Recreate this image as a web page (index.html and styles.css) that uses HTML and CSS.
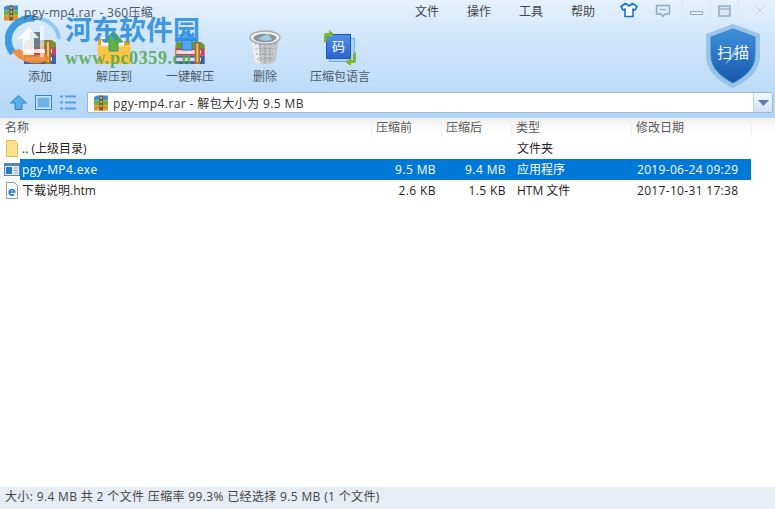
FILE: index.html
```html
<!DOCTYPE html>
<html lang="zh">
<head>
<meta charset="utf-8">
<title>360压缩</title>
<link rel="stylesheet" href="styles.css">
</head>
<body>
<svg class="defs" width="0" height="0" aria-hidden="true">
  <defs>
    <symbol id="rar" viewBox="0 0 16 16">
      <path d="M1 2 L4 0.5 H15 V5.5 H1Z" fill="#3f8fd8"/>
      <path d="M1 5.5H15V10.5H1Z" fill="#6fae3a"/>
      <path d="M1 10.5H15V15.5H1Z" fill="#e8912c"/>
      <rect x="6.5" y="0.5" width="3.4" height="15" fill="#7a5a2a"/>
      <rect x="7.6" y="2" width="1.2" height="2" fill="#e8d9a8"/>
      <rect x="7.6" y="6" width="1.2" height="2" fill="#e8d9a8"/>
      <rect x="7.6" y="10" width="1.2" height="2" fill="#e8d9a8"/>
    </symbol>
    <symbol id="books" viewBox="0 0 36 24">
      <path d="M4 0H30L34 3V8H2V3Z" fill="#6d9b33"/>
      <path d="M2 7H34V15H2Z" fill="#c5455c"/>
      <path d="M3 9H30V13H3Z" fill="#f3dfe0"/>
      <path d="M2 15H34V24H2Z" fill="#3e5ea8"/>
      <path d="M3 17H30V21H3Z" fill="#dfe6f3"/>
      <rect x="23" y="0" width="6" height="24" fill="#a8742c"/>
      <rect x="25" y="2" width="2" height="20" fill="#e2c47e"/>
    </symbol>
  </defs>
</svg>
<div class="app">
  <header class="head">
    <div class="titlebar">
      <svg class="rar-icon" width="16" height="16"><use href="#rar"/></svg>
      <span class="title">pgy-mp4.rar - 360压缩</span>
      <nav class="menu">
        <span class="menu-item">文件</span>
        <span class="menu-item">操作</span>
        <span class="menu-item">工具</span>
        <span class="menu-item">帮助</span>
      </nav>
      <div class="win-btns">
        <svg class="win-skin" width="18" height="16" viewBox="0 0 18 16"><path d="M5.5 1.500 L1 4.500 L3 8 L5 7 V14.500 H13 V7 L15 8 L17 4.500 L12.500 1.500 L9 4Z" fill="#fff" stroke="#1273c9" stroke-width="1.600" stroke-linejoin="round"/></svg>
        <svg class="win-fb" width="16" height="14" viewBox="0 0 16 14"><path d="M1.500 1.500H14.500V10H10L8 12.500L6 10H1.500Z" fill="#dcebfa" stroke="#8ea9c2" stroke-width="1.400"/><path d="M5 5.500H11" stroke="#8ea9c2" stroke-width="1.200"/></svg>
        <span class="win-sep sep-a"></span>
        <svg class="win-min" width="13" height="5" viewBox="0 0 13 5"><rect x="0.500" y="0.500" width="12" height="3" fill="#e4eef8" stroke="#95aec6"/></svg>
        <span class="win-sep sep-b"></span>
        <svg class="win-max" width="13" height="12" viewBox="0 0 13 12"><rect x="1" y="1" width="11" height="10" fill="#d8e8f8" stroke="#8ea9c2" stroke-width="1.400"/><path d="M2 4H11" stroke="#8ea9c2" stroke-width="1.200"/></svg>
        <span class="win-sep sep-c"></span>
        <svg class="win-close" width="14" height="14" viewBox="0 0 14 14"><path d="M2 2L12 12M12 2L2 12" stroke="#f1f6fb" stroke-width="3"/><path d="M2 2L12 12M12 2L2 12" stroke="#a9bfd3" stroke-width="0.800"/></svg>
      </div>
    </div>
    <div class="toolbar">
      <div class="tool tool-add">
        <svg class="tool-icon" width="36" height="36" viewBox="0 0 36 36"><use href="#books" y="10" width="36" height="24"/><path d="M8 2H18V10H23L13 20L3 10H8Z" fill="#6c7f8e"/></svg>
        <span class="tool-label">添加</span>
      </div>
      <div class="tool tool-extract">
        <svg class="tool-icon" width="36" height="36" viewBox="0 0 36 36"><path d="M2 8H14L16 11H34V34H2Z" fill="#e0a21e"/><path d="M5 7H28V22H5Z" fill="#f4f6f7"/><path d="M1 16H35L33 34H3Z" fill="#fbc544"/><path d="M1 16H35" stroke="#fde7a4"/><path d="M13 21V12H8L17.500 1L27 12H22V21Z" fill="#5fb33a" stroke="#3a8c8c"/></svg>
        <span class="tool-label">解压到</span>
      </div>
      <div class="tool tool-onekey">
        <svg class="tool-icon" width="36" height="36" viewBox="0 0 36 36"><use href="#books" y="12" width="36" height="22"/><path d="M10 20V11H4L15 1L26 11H20V20Z" fill="#52a6ee" stroke="#2f78bd"/></svg>
        <span class="tool-label">一键解压</span>
      </div>
      <div class="tool tool-delete">
        <svg class="tool-icon" width="34" height="36" viewBox="0 0 34 36"><path d="M3 7L6 30Q7 34 17 34T28 30L31 7Z" fill="#c4c6c8"/><path d="M3 7L6 30Q7 34 13 33.500L10 8Z" fill="#eceded"/><path d="M7 14H28M7.500 19H27.500M8 24H27M9 29H26M12 11V33M17 11V34M22 11V33" stroke="#8f9193" stroke-width="1.200" stroke-dasharray="1.600 1.600"/><ellipse cx="17" cy="7.500" rx="15" ry="6.500" fill="#f0f1f1" stroke="#a7a9ab" stroke-width="1.400"/><ellipse cx="17" cy="8" rx="11.500" ry="4.200" fill="#8b9298"/><path d="M10 8.500L20 3.800L24 9.500Q16 12.500 10 8.500Z" fill="#a5cbe8"/></svg>
        <span class="tool-label">删除</span>
      </div>
      <div class="tool tool-lang">
        <div class="lang-icon">
          <span class="lang-back"></span>
          <span class="lang-glyph">码</span>
          <svg class="lang-arrows" width="34" height="36" viewBox="0 0 34 36"><path d="M1 13V5Q1 3 3 3H6V0L11 4L6 8V6H4V11Z" fill="#7cb82f"/><path d="M33 22V31Q33 33 31 33H28V36L22 32L28 28V30H30V24Z" fill="#7cb82f"/></svg>
        </div>
        <span class="tool-label">压缩包语言</span>
      </div>
      <div class="scan">
        <svg class="scan-shield" width="54" height="64" viewBox="0 0 54 64"><defs><linearGradient id="shieldfill" x1="0" y1="0" x2="0" y2="1"><stop offset="0" stop-color="#3f92db"/><stop offset="1" stop-color="#1657ab"/></linearGradient></defs><path d="M27 0L54 10V31C54 48 40 58 27 64C14 58 0 48 0 31V10Z" fill="#8bb8df" opacity=".75"/><path d="M27 5L49 13V31C49 45 38 53 27 59C16 53 5 45 5 31V13Z" fill="url(#shieldfill)" stroke="#2f86d0"/><path d="M34 18L18 42L28 32Z" fill="#7fb4e6"/></svg>
        <span class="scan-text">扫描</span>
      </div>
    </div>
    <div class="addressbar">
      <svg class="nav-up" width="17" height="15" viewBox="0 0 17 15"><path d="M5 14.500V8H0.500L8.500 0.500L16.500 8H12V14.500Z" fill="#58aeec" stroke="#2b7fc6"/></svg>
      <svg class="nav-view" width="17" height="15" viewBox="0 0 17 15"><rect x="0.500" y="0.500" width="16" height="14" fill="#cfe3f6" stroke="#2f86d0"/><rect x="2.500" y="2.500" width="12" height="10" fill="#6fb0e8" stroke="#a9d0f2"/></svg>
      <svg class="nav-list" width="16" height="15" viewBox="0 0 16 15"><path d="M0 1.500H3M5 1.500H16M0 7.500H3M5 7.500H16M0 13.500H3M5 13.500H16" stroke="#5a9fdc" stroke-width="2"/></svg>
      <div class="path">
        <svg class="rar-icon path-icon" width="16" height="16"><use href="#rar"/></svg>
        <span class="path-text">pgy-mp4.rar - 解包大小为 9.5 MB</span>
        <span class="path-drop"><svg width="11" height="6" viewBox="0 0 11 6"><path d="M0 0H11L5.500 6Z" fill="#5d7fa6"/></svg></span>
      </div>
    </div>
  </header>
  <main class="list">
    <div class="cols">
      <span class="col">名称</span>
      <span class="col">压缩前</span>
      <span class="col">压缩后</span>
      <span class="col">类型</span>
      <span class="col">修改日期</span>
      <span class="col col-end"></span>
    </div>
    <div class="row">
      <svg class="file-icon" width="14" height="17" viewBox="0 0 14 17"><path d="M1.500 0.500H10L12.500 3V16.500H1.500Z" fill="#fde08a" stroke="#e3bb55"/></svg>
      <div class="cells">
        <span class="cell name">.. (上级目录)</span>
        <span class="cell num"></span>
        <span class="cell num"></span>
        <span class="cell type">文件夹</span>
        <span class="cell date"></span>
      </div>
    </div>
    <div class="row">
      <svg class="file-icon" width="16" height="13" viewBox="0 0 16 13"><rect width="16" height="13" fill="#5b86b4"/><rect x="1" y="3" width="14" height="9" fill="#e6eff8"/><rect x="2" y="4" width="6" height="7" fill="#1f7bd4"/><path d="M9.500 5H14M9.500 7.500H14M9.500 10H14" stroke="#7aa3cc"/></svg>
      <div class="cells selected">
        <span class="cell name">pgy-MP4.exe</span>
        <span class="cell num">9.5 MB</span>
        <span class="cell num">9.4 MB</span>
        <span class="cell type">应用程序</span>
        <span class="cell date">2019-06-24 09:29</span>
      </div>
    </div>
    <div class="row">
      <svg class="file-icon" width="14" height="17" viewBox="0 0 14 17"><path d="M1.500 0.500H9.500L12.500 3.500V16.500H1.500Z" fill="#fff" stroke="#9a9a9a"/><path d="M4.800 10H9.800A2.800 2.800 0 1 0 9 12.300" fill="none" stroke="#1f7bd4" stroke-width="1.700"/></svg>
      <div class="cells">
        <span class="cell name">下载说明.htm</span>
        <span class="cell num">2.6 KB</span>
        <span class="cell num">1.5 KB</span>
        <span class="cell type">HTM 文件</span>
        <span class="cell date">2017-10-31 17:38</span>
      </div>
    </div>
  </main>
  <footer class="status">大小: 9.4 MB 共 2 个文件 压缩率 99.3% 已经选择 9.5 MB (1 个文件)</footer>
</div>
<div class="watermark">
  <svg class="wm-logo" width="58" height="52" viewBox="0 0 58 52"><path d="M30 3A25 22 0 0 0 8 38" fill="none" stroke="#2a8fdc" stroke-width="7" opacity=".88"/><path d="M30 3A25 22 0 0 1 54 24" fill="none" stroke="#7fc0ee" stroke-width="4" opacity=".8"/><path d="M7 36A26 22 0 0 0 46 44L40 38A18 14 0 0 1 15 34Z" fill="#ef8a2e" opacity=".9"/><path d="M12 24L24 12L34 23H29V40H18V24Z" fill="#fff" opacity=".85"/><path d="M35 10H39V42H35Z" fill="#fff" opacity=".6"/></svg>
  <span class="wm-cn">河东软件园</span>
  <span class="wm-url">www.pc0359.cn</span>
</div>
</body>
</html>
```

FILE: styles.css
```css
* { box-sizing: border-box; }
html, body { margin: 0; padding: 0; }
body {
  width: 775px;
  height: 509px;
  overflow: hidden;
  font-family: "Open Sans", "Noto Sans CJK SC", sans-serif;
  font-size: 12px;
  color: #222;
  position: relative;
  background: #fff;
}
.defs { position: absolute; }
.app { display: flex; flex-direction: column; height: 509px; }

.head {
  height: 118px;
  flex: none;
  background: linear-gradient(#e6f2fd 0, #d3e8fb 30px, #b3d6f7 100%);
  display: flex;
  flex-direction: column;
}
.titlebar { height: 24px; display: flex; align-items: center; padding: 2px 0 0 3px; position: relative; }
.title { margin-left: 5px; color: #4a5764; letter-spacing: .3px; position: relative; z-index: 2; line-height: 14px; }
.rar-icon { flex: none; }
.menu { position: absolute; left: 401px; top: 0; display: flex; height: 21px; align-items: center; }
.menu-item { width: 52px; text-align: center; color: #444; }

.win-btns { position: absolute; top: 0; right: 0; width: 160px; height: 21px; }
.win-btns svg, .win-sep { position: absolute; }
.win-skin { left: 5px; top: 2px; }
.win-fb { left: 40px; top: 4px; }
.win-min { left: 75px; top: 11px; }
.win-max { left: 103px; top: 5px; }
.win-close { left: 138px; top: 3px; }
.win-sep { top: 0; width: 1px; height: 18px; background: #d6e7f7; }
.sep-a { left: 67px; }
.sep-b { left: 95px; }
.sep-c { left: 123px; }

.toolbar { height: 68px; display: flex; position: relative; padding-left: 3px; }
.tool { display: flex; flex-direction: column; align-items: center; flex: none; }
.tool-add { width: 74px; }
.tool-extract { width: 74px; }
.tool-onekey { width: 78px; }
.tool-delete { width: 72px; }
.tool-lang { width: 78px; }
.tool-icon { margin-top: 6px; flex: none; }
.tool-label { margin-top: 2px; color: #4d5a66; white-space: nowrap; line-height: 18px; }

.lang-icon { position: relative; width: 34px; height: 36px; margin-top: 6px; flex: none; }
.lang-back { position: absolute; left: 6px; top: 8px; width: 26px; height: 24px; background: #a9d3f3; border: 1px solid #6fb0e6; }
.lang-glyph {
  position: absolute; left: 3px; top: 4px; width: 25px; height: 25px;
  background: linear-gradient(#4d90ea, #2a63cf); border: 1px solid #2a55ad;
  color: #fff; font-size: 13px; line-height: 23px; text-align: center;
}
.lang-arrows { position: absolute; left: 0; top: 0; }

.scan { position: absolute; left: 706px; top: 0; width: 54px; height: 64px; }
.scan-shield { display: block; }
.scan-text {
  position: absolute; left: 0; right: 0; top: 18px; padding-left: 2px; text-align: center;
  color: #f2f7fc; font-size: 15px; letter-spacing: 2px; line-height: 20px;
}

.addressbar { height: 26px; padding-left: 10px; display: flex; align-items: flex-start; }
.nav-up { margin-top: 3px; flex: none; }
.nav-view { margin: 3px 0 0 8px; flex: none; }
.nav-list { margin: 3px 0 0 8px; flex: none; }
.path {
  margin-left: 11px;
  width: 686px;
  height: 21px;
  background: #fff;
  border: 1px solid #9cb7d2;
  border-radius: 2px;
  display: flex;
  align-items: center;
  padding-left: 5px;
}
.path-text { margin-left: 4px; color: #333; letter-spacing: .4px; }
.path-drop {
  margin-left: auto;
  width: 19px;
  height: 19px;
  background: linear-gradient(#f4f9fe, #cfe2f5);
  border-left: 1px solid #c2d6ea;
  display: flex;
  align-items: center;
  justify-content: center;
  flex: none;
}

.list { flex: 1; min-height: 0; }
.cols {
  display: grid;
  grid-template-columns: 372px 70px 70px 120px 120px 23px;
  height: 20px;
  background: linear-gradient(#efefef, #fff 70%);
}
.col { padding-left: 4px; color: #5a5a5a; border-right: 1px solid #efefef; line-height: 19px; }
.col:first-child { padding-left: 5px; }
.col-end { border-right: 0; }

.row { display: flex; height: 21px; align-items: center; width: 751px; }
.file-icon { flex: none; width: 16px; margin-left: 4px; }
.cells {
  flex: 1;
  height: 21px;
  display: grid;
  grid-template-columns: 352px 70px 70px 120px 119px;
  align-items: center;
  color: #1f1f1f;
}
.cell { padding-left: 2px; white-space: nowrap; line-height: 21px; }
.num { text-align: right; padding: 0 6px 0 0; letter-spacing: .4px; }
.type { padding-left: 5px; }
.date { padding-left: 5px; letter-spacing: .32px; }
.selected { background: #0078d7; color: #fff; }
.selected .name { letter-spacing: .36px; }

.status {
  height: 22px;
  flex: none;
  background: #e7edf4;
  color: #444;
  padding-left: 5px;
  line-height: 20px;
  white-space: nowrap;
  letter-spacing: .35px;
}

.watermark { position: absolute; left: 0; top: 0; width: 260px; height: 70px; pointer-events: none; }
.wm-logo { position: absolute; left: 5px; top: 15px; }
.wm-cn {
  position: absolute; left: 65px; top: 17px;
  font-family: "Liberation Serif", "Noto Sans CJK SC", serif;
  font-size: 27px; font-weight: 700; color: #2f90de; opacity: .9; line-height: 28px; white-space: nowrap;
}
.wm-url {
  position: absolute; left: 65px; top: 49px;
  font-family: "Liberation Serif", serif;
  font-size: 18px; font-weight: 700; color: #54a64a; opacity: .85; line-height: 18px; letter-spacing: .6px; white-space: nowrap;
}
```
